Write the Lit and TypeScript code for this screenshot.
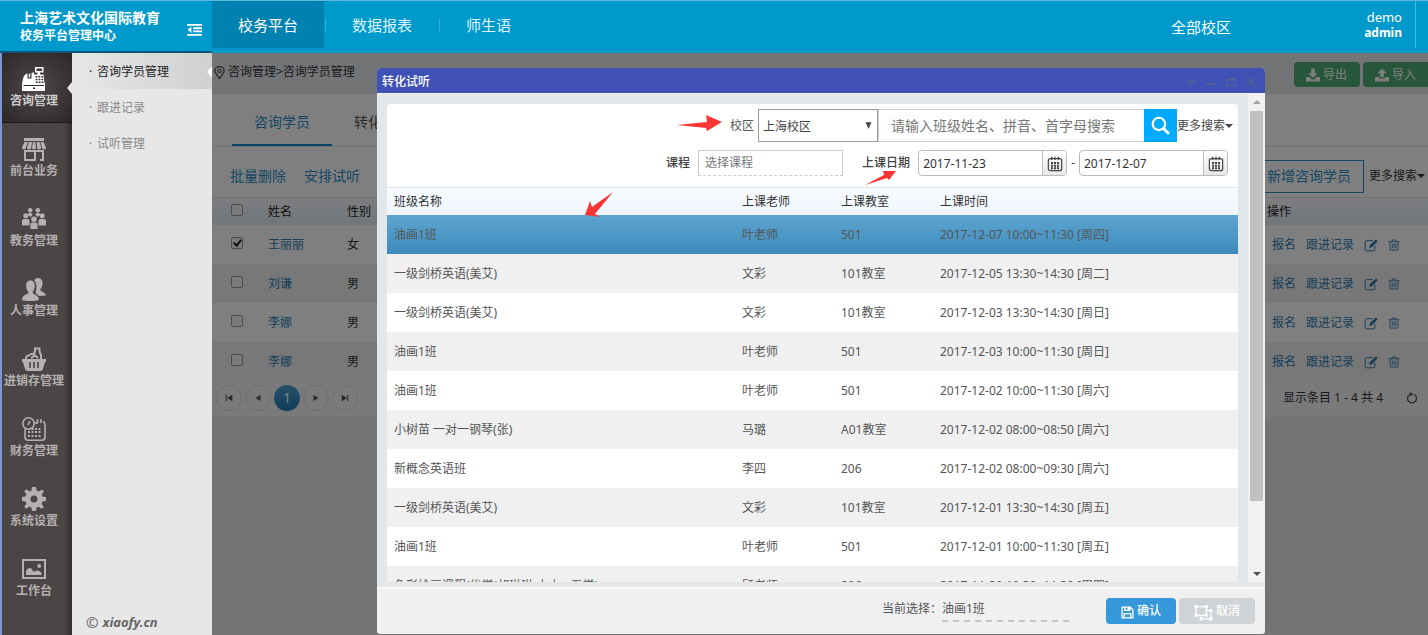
import { LitElement, html, css, svg } from "lit";
import { customElement, state } from "lit/decorators.js";

const ICONS: Record<string, unknown> = {
  register: svg`<path d="M13 0h8.500v5.500h-3.500v2h3.500l1 8.500h.5v8H0v-6q0-3 1-6 1-4.500 4-5.500l7-1V7.500h3.500v-2H13zM14.500 1.500v2.500h5.500v-2.500z" fill-rule="evenodd"/><path fill="#2e2a29" d="M5.500 5.500h4v6h-4zM13.500 9h1.800v1.500h-1.800zM16.400 9h1.800v1.500h-1.800zM19.300 9h1.800v1.500h-1.800zM13.700 11.700h1.800v1.500h-1.800zM16.600 11.700h1.800v1.500h-1.800zM19.500 11.700h1.800v1.500h-1.800zM13.900 14.400h1.800v1.500h-1.800zM16.800 14.400h1.800v1.500h-1.800zM19.700 14.400h1.800v1.500h-1.800zM1.500 18h20.500v1H1.500zM11 20.500h2v1.500h-2z"/><path d="M6.700 6.500h1.600v4H6.700z"/>`,
  shop: svg`<path d="M2 1h20v3H2zM2.500 5H6L4 10.500a2 2 0 0 1-4 0zM7 5h3l-.7 5.500a2 2 0 0 1-4.200 0zM11 5h2.200l.8 5.500a2 2 0 0 1-4 0zM14.500 5h3l1.700 5.500a2 2 0 0 1-4.200 0zM18.500 5h3L24 10.500a2 2 0 0 1-4 0z"/><path fill="none" stroke="currentColor" stroke-width="2" d="M3 13v10h10V14H3M13 23h1M14 14h7v9h-3"/><path d="M6 16.500h4v4H6z" fill="none"/>`,
  group: svg`<circle cx="8.200" cy="3.200" r="2.300"/><circle cx="15.800" cy="3.200" r="2.300"/><circle cx="3.800" cy="8.700" r="2.500"/><circle cx="20.200" cy="8.700" r="2.500"/><circle cx="12" cy="12.200" r="2.700"/><path d="M5.500 8q0-2 2-2h1.500q1.500 0 1.500 1.500L9 10zM18.500 8q0-2-2-2H15q-1.500 0-1.500 1.500L15 10zM0 18.500V14q0-2 2-2h3.600q2 0 2 2v4.500zM16.400 18.500V14q0-2 2-2H22q2 0 2 2v4.500zM8.500 22V17.500q0-2 2-2h3q2 0 2 2V22z"/>`,
  people: svg`<path d="M12 3q2-2.500 5-2 4 1 3.500 6.500-.3 3-2 4.500v2q5 1.500 5.500 4.500l-7 .5q-2-2-3.500-3 1.500-3.500.8-8Q14 4.500 12 3z"/><path d="M8.500 3.500c3.500 0 4.500 3 4.300 6-.2 2.500-1.300 4-2 5v2c3 1 6 2.500 6 6.500-4 1.300-13 1.300-16.800 0 0-4 3.200-5.500 6.200-6.500v-2c-.9-1-1.800-2.500-2-5-.2-3 .8-6 4.300-6z"/>`,
  basket: svg`<path d="M0 12h24v3h-1l-2 7q-.5 2-2.500 2h-13q-2 0-2.500-2l-2-7H0z"/><path d="M4 12q-.5-3.500 3-3.500 2-2.500 4.500-1L13 4.500V1.500h4.500v3L19 8v4" fill="none" stroke="currentColor" stroke-width="2"/><path d="M9 11l4-2.500 3 2.500" fill="none" stroke="currentColor" stroke-width="2"/><path d="M8 15v6M12 15v6M16 15v6" stroke="#4b4646" stroke-width="1.600"/>`,
  calendar: svg`<g fill="none" stroke="currentColor" stroke-width="1.600"><circle cx="6.500" cy="6.500" r="5.700"/><path d="M6 8l2-4M3 12v8q0 3.200 3 3.200h14q3 0 3-3.200V8q0-3-2-3.500M13 6h3M15.500 2v4M19 2v4"/></g><path d="M6 14h2v2H6zM9.500 11h2v2h-2zM13 11h2v2h-2zM16.500 11h2v2h-2zM9.500 14h2v2h-2zM13 14h2v2h-2zM16.500 14h2v2h-2zM6 18h2v2H6zM9.500 18h2v2h-2zM13 18h2v2h-2zM16.500 18h2v2h-2z"/>`,
  gear: svg`<path fill-rule="evenodd" d="M10 0h4l.6 3.600 2.200.9L20 2.400 22 4.600l-2.300 3 .9 2.200L24 10v4l-3.500.6-.9 2.200L21.800 20 19.800 22l-3-2.300-2.200.9L14 24h-4l-.6-3.500-2.200-.9L4.200 21.700 2.200 19.700l2.200-3-.9-2.200L0 14v-4l3.500-.6.9-2.200L2.300 4.200 4.300 2.200l3 2.200 2.200-.9zM12 8.500a3.500 3.500 0 1 0 0 7 3.500 3.500 0 0 0 0-7z"/>`,
  picture: svg`<path fill-rule="evenodd" d="M0 2h24v20H0zM2 4v16h20V4z"/><circle cx="17.200" cy="9" r="1.900"/><path d="M4 18V14q1.500-3.500 4-3 2 0 3 3.500h2q1-1 2.500-1 2.500 0 4 2.500v2z"/>`,
  edit: svg`<path fill="none" stroke="currentColor" stroke-width="1.700" d="M18.500 13v6.500q0 2.500-2.500 2.500H4.500Q2 22 2 19.500V7q0-2.500 2.500-2.500H15"/><path d="M9 17l1-5L20.500 2.500l3 3L13.500 16z"/>`,
  trash: svg`<path fill="none" stroke="currentColor" stroke-width="1.700" d="M1 5.500h22M8 5.500V2h8v3.500M4 5.500V22h16V5.500M8.500 9v9.500M12 9v9.500M15.500 9v9.500"/>`,
  download: svg`<path d="M9 1h6v8h5l-8 8-8-8h5z"/><path d="M0 15.500h6l4 4h4l4-4h6V23H0z"/>`,
  upload: svg`<path d="M9 16h6V9h5l-8-8-8 8h5z"/><path d="M0 15.500h7V18h10v-2.500h7V23H0z"/>`,
  date: svg`<path fill="none" stroke="currentColor" stroke-width="1.800" d="M5 4h14q3 0 3 3v12q0 3-3 3H5q-3 0-3-3V7q0-3 3-3zM7 1v5M12 1v5M17 1v5"/><path d="M6 9h3v3H6zM10.500 9h3v3h-3zM15 9h3v3h-3zM6 13h3v3H6zM10.500 13h3v3h-3zM15 13h3v3h-3zM6 17h3v3H6zM10.500 17h3v3h-3zM15 17h3v3h-3z"/>`,
  search: svg`<circle cx="10" cy="10" r="7.800" fill="none" stroke="currentColor" stroke-width="2.800"/><path d="M16 16l5.500 5.500" stroke="currentColor" stroke-width="3.800" stroke-linecap="round"/>`,
  save: svg`<path fill="none" stroke="currentColor" stroke-width="2.400" d="M2 2h15l5 5v15H2zM7 2v6h9V2M6 22v-8h12v8"/><path d="M12 2h3v5h-3z"/>`,
  cancel: svg`<path fill="none" stroke="currentColor" stroke-width="1.600" d="M2.500 4.500h13v11h-13zM9 15.500V20h12.500V9.500h-6"/><path d="M.5 2.500h4v4h-4zM13.500 2.500h4v4h-4zM.500 13.500h4v4h-4zM13.500 13.500h4v4h-4zM19.500 7.500h4v4h-4zM19.500 18h4v4h-4zM7 18h4v4H7z"/>`,
  collapse: svg`<path d="M0 3h24v3H0zM10 8.500h14v3H10zM10 13.500h14v3H10zM0 19h24v3H0zM7 7.500v10L1 12.500z"/>`,
  pin: svg`<path fill="none" stroke="currentColor" stroke-width="2.400" d="M12 23Q3.500 13 3.500 8.500a8.500 7.500 0 0 1 17 0Q20.500 13 12 23z"/><circle cx="12" cy="9" r="3" fill="none" stroke="currentColor" stroke-width="2"/>`,
  refresh: svg`<path fill="none" stroke="currentColor" stroke-width="2.600" d="M16 4.500a9 9 0 1 1-8 0"/><path d="M7 0l8 4-7 5z"/>`,
  caret: svg`<path d="M0 6h24L12 18z"/>`,
  drop: svg`<path d="M4 3h16L12 21z"/>`,
  first: svg`<path d="M4 4h2.500v16H4zM20 4v16L7 12z"/>`,
  prev: svg`<path d="M18 5v14L6 12z"/>`,
  next: svg`<path d="M6 5v14l12-7z"/>`,
  last: svg`<path d="M17.500 4H20v16h-2.500zM4 4v16l13-8z"/>`,
  wPin: svg`<path fill="none" stroke="currentColor" stroke-width="2" d="M1 12h8M9 6v12M9 8h9v8H9M20 7v10"/>`,
  wMin: svg`<path d="M2 15h20v3H2z"/>`,
  wMax: svg`<path fill="none" stroke="currentColor" stroke-width="2" d="M3 6h18v13H3z"/><path d="M3 6h18v3H3z"/>`,
  wClose: svg`<path fill="none" stroke="currentColor" stroke-width="2.200" d="M3 3l18 18M21 3L3 21"/>`,
};

const icon = (name: string, size = 12) =>
  html`<svg class="icon" viewBox="0 0 24 24" width=${size} height=${size} fill="currentColor" aria-hidden="true">${ICONS[name]}</svg>`;

const NAV = [
  ["register", "咨询管理"],
  ["shop", "前台业务"],
  ["group", "教务管理"],
  ["people", "人事管理"],
  ["basket", "进销存管理"],
  ["calendar", "财务管理"],
  ["gear", "系统设置"],
  ["picture", "工作台"],
];

const STUDENTS = [
  ["王丽丽", "女"],
  ["刘谦", "男"],
  ["李娜", "男"],
  ["李娜", "男"],
];

const CLASSES = [
  ["油画1班", "叶老师", "501", "2017-12-07 10:00~11:30 [周四]"],
  ["一级剑桥英语(美艾)", "文彩", "101教室", "2017-12-05 13:30~14:30 [周二]"],
  ["一级剑桥英语(美艾)", "文彩", "101教室", "2017-12-03 13:30~14:30 [周日]"],
  ["油画1班", "叶老师", "501", "2017-12-03 10:00~11:30 [周日]"],
  ["油画1班", "叶老师", "501", "2017-12-02 10:00~11:30 [周六]"],
  ["小树苗 一对一钢琴(张)", "马璐", "A01教室", "2017-12-02 08:00~08:50 [周六]"],
  ["新概念英语班", "李四", "206", "2017-12-02 08:00~09:30 [周六]"],
  ["一级剑桥英语(美艾)", "文彩", "101教室", "2017-12-01 13:30~14:30 [周五]"],
  ["油画1班", "叶老师", "501", "2017-12-01 10:00~11:30 [周五]"],
  ["色彩绘画课程(优学(胡琳琳 小小 - 五学)", "顾老师", "206", "2017-11-30 10:30~11:30 [周四]"],
];

const base = css`
  * { box-sizing: border-box; }
  button, input, select {
    font: inherit; color: inherit; margin: 0; padding: 0;
    border: 0; background: none; border-radius: 0; outline: 0;
  }
  a { color: inherit; text-decoration: none; }
  .icon { display: block; flex: none; }
  table { border-collapse: collapse; width: 100%; table-layout: fixed; }
  th { font-weight: 400; text-align: left; box-shadow: inset 0 1px #e2e6ea; }
  th, td { padding: 0; white-space: nowrap; }
`;

@customElement("trial-dialog")
export class TrialDialog extends LitElement {
  @state() private selected = 0;

  static styles = [base, css`
    :host {
      display: flex; flex-direction: column; position: relative;
      width: min(888px, 100%); border-radius: 4px 4px 3px 3px; overflow: hidden;
      background: #f0f0f0; color: #555;
    }
    .title {
      display: flex; align-items: center; justify-content: space-between;
      height: 25px; padding: 2px 8px 0 5px; background: #3f51b5; color: #fff;
    }
    .title h2 { margin: 0; font-size: 12px; font-weight: 500; }
    .tools { display: flex; gap: 8px; color: #59608f; padding-top: 1px; }
    .body { flex: 1; min-height: 0; display: flex; background: #e4e7ea; padding-bottom: 5px; border-top: 1px solid #f3f4f6; }
    .view { flex: 1; min-width: 0; overflow: hidden; padding: 10px 10px 0; }
    .card { background: #fff; border-radius: 4px 4px 0 0; }
    .filters { display: flex; flex-direction: column; align-items: flex-end; gap: 8px; height: 83px; padding: 5px 10px 0 0; }
    .line { display: flex; align-items: center; }
    .line.top { height: 33px; margin-right: -5px; }
    .line.top > label { margin-right: 4px; }
    .select { display: grid; align-items: center; width: 120px; height: 33px; }
    .select > * { grid-area: 1 / 1; }
    .select select {
      appearance: none; width: 100%; height: 33px; padding: 2px 4px 0;
      border: 1px solid #999; background: #fff; color: #444;
    }
    .select .icon { justify-self: end; margin-right: 5px; pointer-events: none; color: #444; }
    .keyword { width: 266px; height: 33px; padding: 0 12px; border: 1px solid #ccc; border-right: 0; font-size: 14px; }
    ::placeholder { color: #777; opacity: 1; }
    .go { display: grid; place-items: center; width: 33px; height: 33px; background: #00aaff; color: #fff; }
    .more { display: flex; align-items: center; color: #444; }
    .line.low { height: 26px; color: #444; }
    .strong { font-weight: 500; margin-right: 8px; }
    .course { width: 145px; height: 26px; padding: 0 6px 2px; margin-right: 19px; border: 1px solid #ccc; border-bottom-style: dashed; }
    .date { display: flex; width: 149px; height: 26px; border: 1px solid #bbb; border-radius: 4px; overflow: hidden; }
    .date input { flex: 1; min-width: 0; padding: 2px 4px 0; color: #333; }
    .date button { display: grid; place-items: center; width: 24px; padding-top: 2px; border-left: 1px solid #bbb; background: linear-gradient(#fff, #e8e8e8); color: #444; }
    .dash { padding: 0 4px; }
    .c-name { width: 348px; }
    .c-side { width: 99px; }
    th { height: 28px; padding: 2px 0 0 7px; color: #333; background: linear-gradient(#f8fbff, #eef6fd); }
    td { height: 39px; padding-left: 7px; }
    tbody tr:nth-child(even) td { background: #f0f0f0; }
    tbody tr.on { background: linear-gradient(#5ea5d0, #3d8bbb); }
    .bar { flex: none; width: 17px; display: flex; flex-direction: column; align-items: center; background: #f1f1f1; color: #505050; }
    .bar .cap { height: 17px; display: grid; place-items: center; }
    .bar .cap.up { color: #a3a3a3; transform: rotate(180deg); }
    .bar .track { flex: 1; width: 13px; }
    .bar .thumb { height: 86%; background: #c1c1c1; }
    .foot {
      display: flex; align-items: center; justify-content: flex-end; height: 47px;
      padding: 0 10px 2px 0; border-top: 2px solid #fafafa;
    }
    .chosen { display: flex; margin-right: 33px; }
    .chosen output {
      display: block; width: 131px; padding-bottom: 4px;
      background: repeating-linear-gradient(90deg, #c4c4c4 0 6px, transparent 6px 11px) bottom / 100% 2px no-repeat;
    }
    .act { display: flex; align-items: center; justify-content: center; gap: 3px; width: 70px; height: 26px; border-radius: 4px; color: #fff; font-weight: 500; background: #3498db; }
    .act.off { width: 76px; margin-left: 3px; background: #cfd3d5; }
    .act .icon { margin-top: 3px; }
    .marks { position: absolute; inset: 0; width: 100%; height: 100%; pointer-events: none; fill: #fb3434; }
  `];

  render() {
    return html`
      <header class="title">
        <h2>转化试听</h2>
        <div class="tools">
          <button aria-label="固定">${icon("wPin")}</button><button aria-label="最小化">${icon("wMin")}</button>
          <button aria-label="最大化">${icon("wMax")}</button><button aria-label="关闭">${icon("wClose")}</button>
        </div>
      </header>
      <div class="body">
        <div class="view"><div class="card">
          <form class="filters">
            <div class="line top">
              <label for="campus">校区</label>
              <span class="select">
                <select id="campus"><option>上海校区</option></select>${icon("drop", 9)}
              </span>
              <input class="keyword" aria-label="搜索" placeholder="请输入班级姓名、拼音、首字母搜索" />
              <button type="button" class="go" aria-label="搜索">${icon("search", 19)}</button>
              <a class="more" href="#">更多搜索${icon("caret", 8)}</a>
            </div>
            <div class="line low">
              <label class="strong" for="course">课程</label>
              <input id="course" class="course" placeholder="选择课程" />
              <label class="strong" for="from">上课日期</label>
              <span class="date"><input id="from" value="2017-11-23" /><button type="button" aria-label="选择日期">${icon("date", 16)}</button></span>
              <span class="dash">-</span>
              <span class="date"><input aria-label="结束日期" value="2017-12-07" /><button type="button" aria-label="选择日期">${icon("date", 16)}</button></span>
            </div>
          </form>
          <table>
            <colgroup><col class="c-name" /><col class="c-side" /><col class="c-side" /><col /></colgroup>
            <thead><tr><th>班级名称</th><th>上课老师</th><th>上课教室</th><th>上课时间</th></tr></thead>
            <tbody>
              ${CLASSES.map((row, i) => html`
                <tr class=${i === this.selected ? "on" : ""} @click=${() => (this.selected = i)}>
                  ${row.map((cell) => html`<td>${cell}</td>`)}
                </tr>`)}
            </tbody>
          </table>
        </div></div>
        <div class="bar">
          <span class="cap up">${icon("caret", 8)}</span>
          <div class="track"><div class="thumb"></div></div>
          <span class="cap">${icon("caret", 8)}</span>
        </div>
      </div>
      <footer class="foot">
        <div class="chosen"><span>当前选择：</span><output>${CLASSES[this.selected][0]}</output></div>
        <button class="act">${icon("save", 13)}确认</button>
        <button class="act off">${icon("cancel", 19)}取消</button>
      </footer>
      <svg class="marks" aria-hidden="true">
        <path d="M300 57L330 54 329 47 345 54 330 63 329 60z" />
        <path d="M236 124L218 146 223 149 208 147 213 133 215 139z" />
        <path d="M488 117L507 107 506 103 519 103 512 112 510 110z" />
      </svg>
    `;
  }
}

@customElement("app-root")
export class AppRoot extends LitElement {
  static styles = [base, css`
    :host {
      display: flex; flex-direction: column; height: 100vh; min-height: 600px; overflow: hidden;
      font: 12px/18px "Noto Sans", "Noto Sans CJK SC", sans-serif; color: #333;
    }
    .top { display: flex; flex: none; height: 53px; background: #0099cc; color: #fff; border-top: 1px solid #63b8dc; }
    .brand {
      flex: none; display: flex; justify-content: space-between; align-items: center; width: 212px;
      padding: 1px 10px 0 20px; border-bottom: 2px solid #04577a;
    }
    .brand h1 { margin: 0; font-size: 14px; line-height: 18px; font-weight: 700; }
    .brand p { margin: 0; font-weight: 700; line-height: 18px; }
    .brand button { padding-top: 6px; }
    .tabs { display: flex; align-items: center; height: 47px; font-size: 15px; }
    .tabs a { display: grid; place-items: center; padding: 0 26px; height: 47px; color: #dff3fa; }
    .tabs a.on { background: #0081b0; color: #fff; }
    .tabs i { width: 1px; height: 14px; margin-left: 1px; background: #33add6; }
    .who { display: flex; margin-left: auto; padding-right: 12px; }
    .campus { font-size: 15px; line-height: 52px; margin-right: 133px; }
    .user { font-size: 13px; line-height: 15px; text-align: right; padding: 9px 13px 0 0; height: 47px; border-right: 1px solid #4cb8dc; }
    .user b { display: block; font-size: 12px; }

    .shell { flex: 1; min-height: 0; display: flex; }
    .nav { flex: none; width: 72px; background: linear-gradient(90deg, transparent 62px, rgb(0 0 0 / 35%)), #4b4646; border-left: 2px solid #7d96d4; }
    .nav a {
      display: flex; flex-direction: column; align-items: center; height: 70px;
      padding: 14px 6px 0 0; gap: 1px; color: #b5b1b0; font-weight: 700; white-space: nowrap; position: relative;
    }
    .nav a.on { background: radial-gradient(#4f4a49, #2b2726); color: #ccc; border-bottom: 1px solid #1d1a1a; }
    .nav a.on .icon { color: #fff; }
    .nav a.on::after { content: ""; position: absolute; right: 0; top: 29px; border: 6px solid transparent; border-left: 0; border-right: 5px solid #e8e7e8; }
    .sub { flex: none; width: 140px; display: flex; flex-direction: column; background: #e8e7e8; color: #888; }
    .sub a { position: relative; height: 36px; line-height: 38px; padding-left: 17px; }
    .sub a span { display: inline-block; width: 8px; }
    .sub a.on { color: #222; background: linear-gradient(90deg, #e8e7e8, #d0d0d0); }
    .sub a.on::after { content: ""; position: absolute; right: 0; top: 13px; border: 6px solid transparent; border-left: 0; border-right: 5px solid #fff; }
    .sub footer { margin-top: auto; padding: 0 0 4px 14px; display: flex; gap: 4px; font-size: 13px; color: #666; }
    .sub footer span { font-size: 15px; }
    .sub footer em { font-weight: 700; }

    .main { flex: 1; min-width: 0; position: relative; overflow: hidden; background: #e6e9ec; color: #333; }
    .crumb { display: flex; align-items: center; height: 41px; padding: 0 0 3px 1px; }
    .crumb > .icon { margin-right: 2px; color: #555; }
    .crumb .io { margin: 5px 0 0 auto; display: flex; gap: 3px; }
    .io button { display: flex; align-items: center; gap: 3px; height: 25px; padding: 0 13px 0 12px; border-radius: 4px; background: #4fae75; color: #fff; }
    .io button:last-child { border-radius: 4px 0 0 4px; padding-right: 12px; }
    .panel { background: #fff; border-radius: 4px 0 0 0; }
    .ptabs { display: flex; height: 53px; padding-left: 20px; font-size: 14px; border-bottom: 1px solid #e2e6ea; }
    .ptabs a { width: 100px; padding: 19px 0 0 22px; height: 52px; color: #555; }
    .ptabs a.on { color: #2b8fc9; border-bottom: 2px solid #0c86cc; }
    .bulk { display: flex; align-items: center; height: 50px; padding: 8px 3px 0 18px; gap: 18px; font-size: 14px; color: #2b8fc9; }
    .bulk .add { margin-left: auto; height: 33px; padding: 0 12px; border: 1px solid #2b8fc9; color: #2b8fc9; }
    .bulk .more { display: flex; align-items: center; font-size: 12px; color: #333; margin-left: -13px; }
    .w-check { width: 56px; } .w-name { width: 79px; } .w-op { width: 161px; }
    th { height: 28px; padding-top: 2px; color: #222; background: linear-gradient(#f8fbff, #e6edf4); }
    td { height: 39px; }
    td:first-child, th:first-child { padding-left: 19px; }
    tbody tr:nth-child(even) { background: #f0f0f0; }
    .name { color: #2b7cb3; }
    input[type="checkbox"] {
      appearance: none; display: block; position: relative; width: 12px; height: 12px;
      border: 1px solid #999; border-radius: 2px; background: #f4f4f4; margin-bottom: 4px;
    }
    input[type="checkbox"]:checked::after {
      content: ""; position: absolute; left: 3px; top: 0; width: 3px; height: 6px;
      border: solid #222; border-width: 0 2px 2px 0; transform: rotate(40deg);
    }
    .ops { display: flex; align-items: center; gap: 10px; padding-left: 5px; color: #2b7cb3; }
    .pager { display: flex; align-items: center; gap: 3px; height: 36px; padding: 0 10px 2px 4px; background: #f4f5f6; }
    .pager button { display: grid; place-items: center; width: 26px; height: 26px; border: 1px solid #ddd; border-radius: 50%; color: #555; }
    .pager button.on { border: 0; background: linear-gradient(#4fa3d4, #1f78b0); color: #fff; font-size: 14px; }
    .pager .sum { margin-left: auto; margin-right: 20px; }
    .pager button.plain { border: 0; width: 12px; }

    .mask { position: absolute; inset: 0; display: flex; justify-content: center; padding: 15px 0 1px 2px; background: rgb(0 0 0 / 50%); }
  `];

  render() {
    return html`
      <header class="top">
        <div class="brand">
          <div><h1>上海艺术文化国际教育</h1><p>校务平台管理中心</p></div>
          <button aria-label="收起菜单">${icon("collapse", 15)}</button>
        </div>
        <nav class="tabs">
          <a class="on" href="#">校务平台</a><i></i><a href="#">数据报表</a><i></i><a href="#">师生语</a>
        </nav>
        <div class="who">
          <a class="campus" href="#">全部校区</a>
          <div class="user">demo<b>admin</b></div>
        </div>
      </header>
      <div class="shell">
        <nav class="nav">
          ${NAV.map(([glyph, label], i) => html`<a href="#" class=${i === 0 ? "on" : ""}>${icon(glyph, 24)}<span>${label}</span></a>`)}
        </nav>
        <nav class="sub">
          <a class="on" href="#"><span>·</span>咨询学员管理</a>
          <a href="#"><span>·</span>跟进记录</a>
          <a href="#"><span>·</span>试听管理</a>
          <footer><span>©</span><em>xiaofy.cn</em></footer>
        </nav>
        <main class="main">
          <div class="crumb">
            ${icon("pin", 13)}<span>咨询管理&gt;咨询学员管理</span>
            <div class="io"><button>${icon("download", 14)}导出</button><button>${icon("upload", 14)}导入</button></div>
          </div>
          <section class="panel">
            <nav class="ptabs"><a class="on" href="#">咨询学员</a><a href="#">转化试听</a></nav>
            <div class="bulk">
              <a href="#">批量删除</a><a href="#">安排试听</a>
              <button class="add">新增咨询学员</button>
              <a class="more" href="#">更多搜索${icon("caret", 8)}</a>
            </div>
            <table>
              <colgroup><col class="w-check" /><col class="w-name" /><col /><col class="w-op" /></colgroup>
              <thead><tr><th><input type="checkbox" aria-label="全选" /></th><th>姓名</th><th>性别</th><th>操作</th></tr></thead>
              <tbody>
                ${STUDENTS.map(([name, sex], i) => html`
                  <tr>
                    <td><input type="checkbox" aria-label=${name} ?checked=${i === 0} /></td>
                    <td><a class="name" href="#">${name}</a></td>
                    <td>${sex}</td>
                    <td><div class="ops"><a href="#">报名</a><a href="#">跟进记录</a><button aria-label="编辑">${icon("edit", 14)}</button><button aria-label="删除">${icon("trash", 12)}</button></div></td>
                  </tr>`)}
              </tbody>
            </table>
            <div class="pager">
              <button aria-label="首页">${icon("first", 10)}</button><button aria-label="上一页">${icon("prev", 10)}</button>
              <button class="on">1</button>
              <button aria-label="下一页">${icon("next", 10)}</button><button aria-label="末页">${icon("last", 10)}</button>
              <span class="sum">显示条目 1 - 4 共 4</span>
              <button class="plain" aria-label="刷新">${icon("refresh", 12)}</button>
            </div>
          </section>
          <div class="mask"><trial-dialog role="dialog" aria-label="转化试听"></trial-dialog></div>
        </main>
      </div>
    `;
  }
}
